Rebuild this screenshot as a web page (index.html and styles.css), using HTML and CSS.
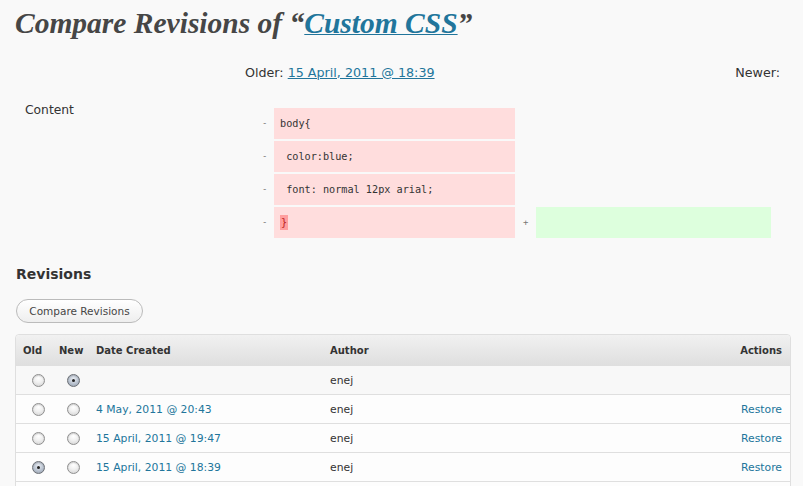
FILE: index.html
```html
<!DOCTYPE html>
<html>
<head>
<meta charset="utf-8">
<link rel="stylesheet" href="styles.css">
</head>
<body>
<div class="wrap">
  <h2 class="title">Compare Revisions of “<a href="#">Custom CSS</a>”</h2>

  <div class="versions">
    <div class="older">Older: <a href="#">15 April, 2011 @ 18:39</a></div>
    <div class="newer">Newer:</div>
  </div>

  <div class="diff">
    <div class="label">Content</div>
    <div class="lines">
      <div class="line"><span class="sign">-</span><span class="del">body{</span><span class="sign plus"></span><span class="blank"></span></div>
      <div class="line"><span class="sign">-</span><span class="del">&nbsp;color:blue;</span><span class="sign plus"></span><span class="blank"></span></div>
      <div class="line"><span class="sign">-</span><span class="del">&nbsp;font: normal 12px arial;</span><span class="sign plus"></span><span class="blank"></span></div>
      <div class="line"><span class="sign">-</span><span class="del"><span class="hl">}</span></span><span class="sign plus">+</span><span class="ins"></span></div>
    </div>
  </div>

  <h3 class="subtitle">Revisions</h3>
  <button class="button">Compare Revisions</button>

  <table class="revs">
    <thead>
      <tr>
        <th class="c-old">Old</th>
        <th class="c-new">New</th>
        <th class="c-date">Date Created</th>
        <th class="c-author">Author</th>
        <th class="c-actions">Actions</th>
      </tr>
    </thead>
    <tbody>
      <tr class="alt">
        <td class="c-old"><span class="radio"></span></td>
        <td class="c-new"><span class="radio on"></span></td>
        <td class="c-date"></td>
        <td class="c-author">enej</td>
        <td class="c-actions"></td>
      </tr>
      <tr>
        <td class="c-old"><span class="radio"></span></td>
        <td class="c-new"><span class="radio"></span></td>
        <td class="c-date"><a href="#">4 May, 2011 @ 20:43</a></td>
        <td class="c-author">enej</td>
        <td class="c-actions"><a href="#">Restore</a></td>
      </tr>
      <tr>
        <td class="c-old"><span class="radio"></span></td>
        <td class="c-new"><span class="radio"></span></td>
        <td class="c-date"><a href="#">15 April, 2011 @ 19:47</a></td>
        <td class="c-author">enej</td>
        <td class="c-actions"><a href="#">Restore</a></td>
      </tr>
      <tr>
        <td class="c-old"><span class="radio on"></span></td>
        <td class="c-new"><span class="radio"></span></td>
        <td class="c-date"><a href="#">15 April, 2011 @ 18:39</a></td>
        <td class="c-author">enej</td>
        <td class="c-actions"><a href="#">Restore</a></td>
      </tr>
      <tr>
        <td class="c-old"></td>
        <td class="c-new"></td>
        <td class="c-date"></td>
        <td class="c-author"></td>
        <td class="c-actions"></td>
      </tr>
    </tbody>
  </table>
</div>
</body>
</html>
```

FILE: styles.css
```css
html, body {
  margin: 0;
  padding: 0;
  background: #f9f9f9;
}
body {
  font-family: "DejaVu Sans", "Liberation Sans", sans-serif;
  color: #333;
  font-size: 12px;
}
a {
  color: #21759b;
}
.wrap {
  padding: 0 13px 0 15px;
}
.title {
  margin: 0;
  padding-top: 6px;
  height: 48px;
  font-family: "Liberation Serif", "DejaVu Serif", serif;
  font-style: italic;
  font-weight: bold;
  font-size: 29.5px;
  line-height: 34px;
  color: #464646;
}
.title a {
  color: #21759b;
  text-decoration: underline;
  text-decoration-thickness: 1px;
}
.versions {
  display: flex;
  justify-content: space-between;
  height: 36px;
  align-items: center;
  font-size: 12.7px;
  color: #333;
  padding-left: 230px;
  padding-right: 10px;
}
.versions a {
  text-decoration-thickness: 1px;
}
.diff {
  display: flex;
  margin-top: 12px;
}
.label {
  width: 240px;
  padding-left: 10px;
  box-sizing: border-box;
  font-size: 12.3px;
  line-height: 14px;
  padding-top: 1px;
  color: #333;
}
.lines {
  display: flex;
  flex-direction: column;
  gap: 2px;
  padding-top: 6px;
}
.line {
  display: flex;
  height: 31px;
}
.sign {
  width: 19px;
  font-family: "DejaVu Sans Mono", monospace;
  font-size: 9px;
  color: #777;
  line-height: 31px;
  padding-left: 7px;
  box-sizing: border-box;
}
.sign.plus {
  width: 21px;
  padding-left: 8px;
}
.del, .ins, .blank {
  display: block;
  font-family: "DejaVu Sans Mono", monospace;
  font-size: 10.2px;
  line-height: 31px;
  color: #333;
  padding-left: 6px;
  box-sizing: border-box;
  white-space: pre;
}
.del {
  width: 241px;
  background: #ffdddd;
}
.ins {
  width: 235px;
  background: #ddffdd;
}
.blank {
  width: 235px;
}
.hl {
  background: #ff9e9e;
  padding: 2px 1px;
  color: #b22;
}
.subtitle {
  margin: 25px 0 0 1px;
  font-size: 14px;
  font-weight: bold;
  line-height: 22px;
  color: #333;
}
.button {
  display: block;
  margin: 14px 0 0 1px;
  height: 24px;
  width: 127px;
  padding: 0;
  border: 1px solid #bbb;
  border-radius: 12px;
  background: linear-gradient(#ffffff, #eeeeee);
  font-family: "DejaVu Sans", sans-serif;
  font-size: 10.5px;
  color: #464646;
}
.revs {
  margin-top: 11px;
  width: 776px;
  border-collapse: separate;
  border-spacing: 0;
  border: 1px solid #dfdfdf;
  border-radius: 4px 4px 0 0;
  background: #fdfdfd;
  font-size: 10.8px;
}
.revs th {
  height: 30px;
  padding: 0;
  background: linear-gradient(#f1f1f1, #dfdfdf);
  text-align: left;
  font-weight: bold;
  color: #333;
  font-size: 10px;
}
.revs thead th:first-child { border-top-left-radius: 4px; }
.revs thead th:last-child { border-top-right-radius: 4px; }
.revs td {
  height: 29px;
  box-sizing: border-box;
  padding: 0;
  border-top: 1px solid #dfdfdf;
  color: #333;
}
.revs tr.alt td { background: #f8f8f8; }
.revs td a { text-decoration: none; }
.c-old { width: 36px; padding-left: 7px !important; }
.c-new { width: 37px; }
.c-date { width: 234px; }
.revs .c-actions { text-align: right; padding-right: 8px !important; }
td.c-old { padding-left: 16px !important; width: 27px; }
td.c-new { padding-left: 8px !important; width: 29px; }
.radio {
  display: block;
  width: 11px;
  height: 11px;
  border-radius: 50%;
  border: 1px solid #8f8f8f;
  background: radial-gradient(circle at 50% 30%, #ffffff 0%, #f0f0f0 45%, #cfcfcf 100%);
  box-shadow: inset 0 1px 1px rgba(0,0,0,0.15);
  position: relative;
}
.radio.on {
  background: radial-gradient(circle at 50% 35%, #e8ecf2 0%, #b9c2cf 55%, #8e99a8 100%);
  border-color: #6b6f75;
}
.radio.on::after {
  content: "";
  position: absolute;
  left: 4px;
  top: 4px;
  width: 3px;
  height: 3px;
  border-radius: 50%;
  background: #222;
}
```
